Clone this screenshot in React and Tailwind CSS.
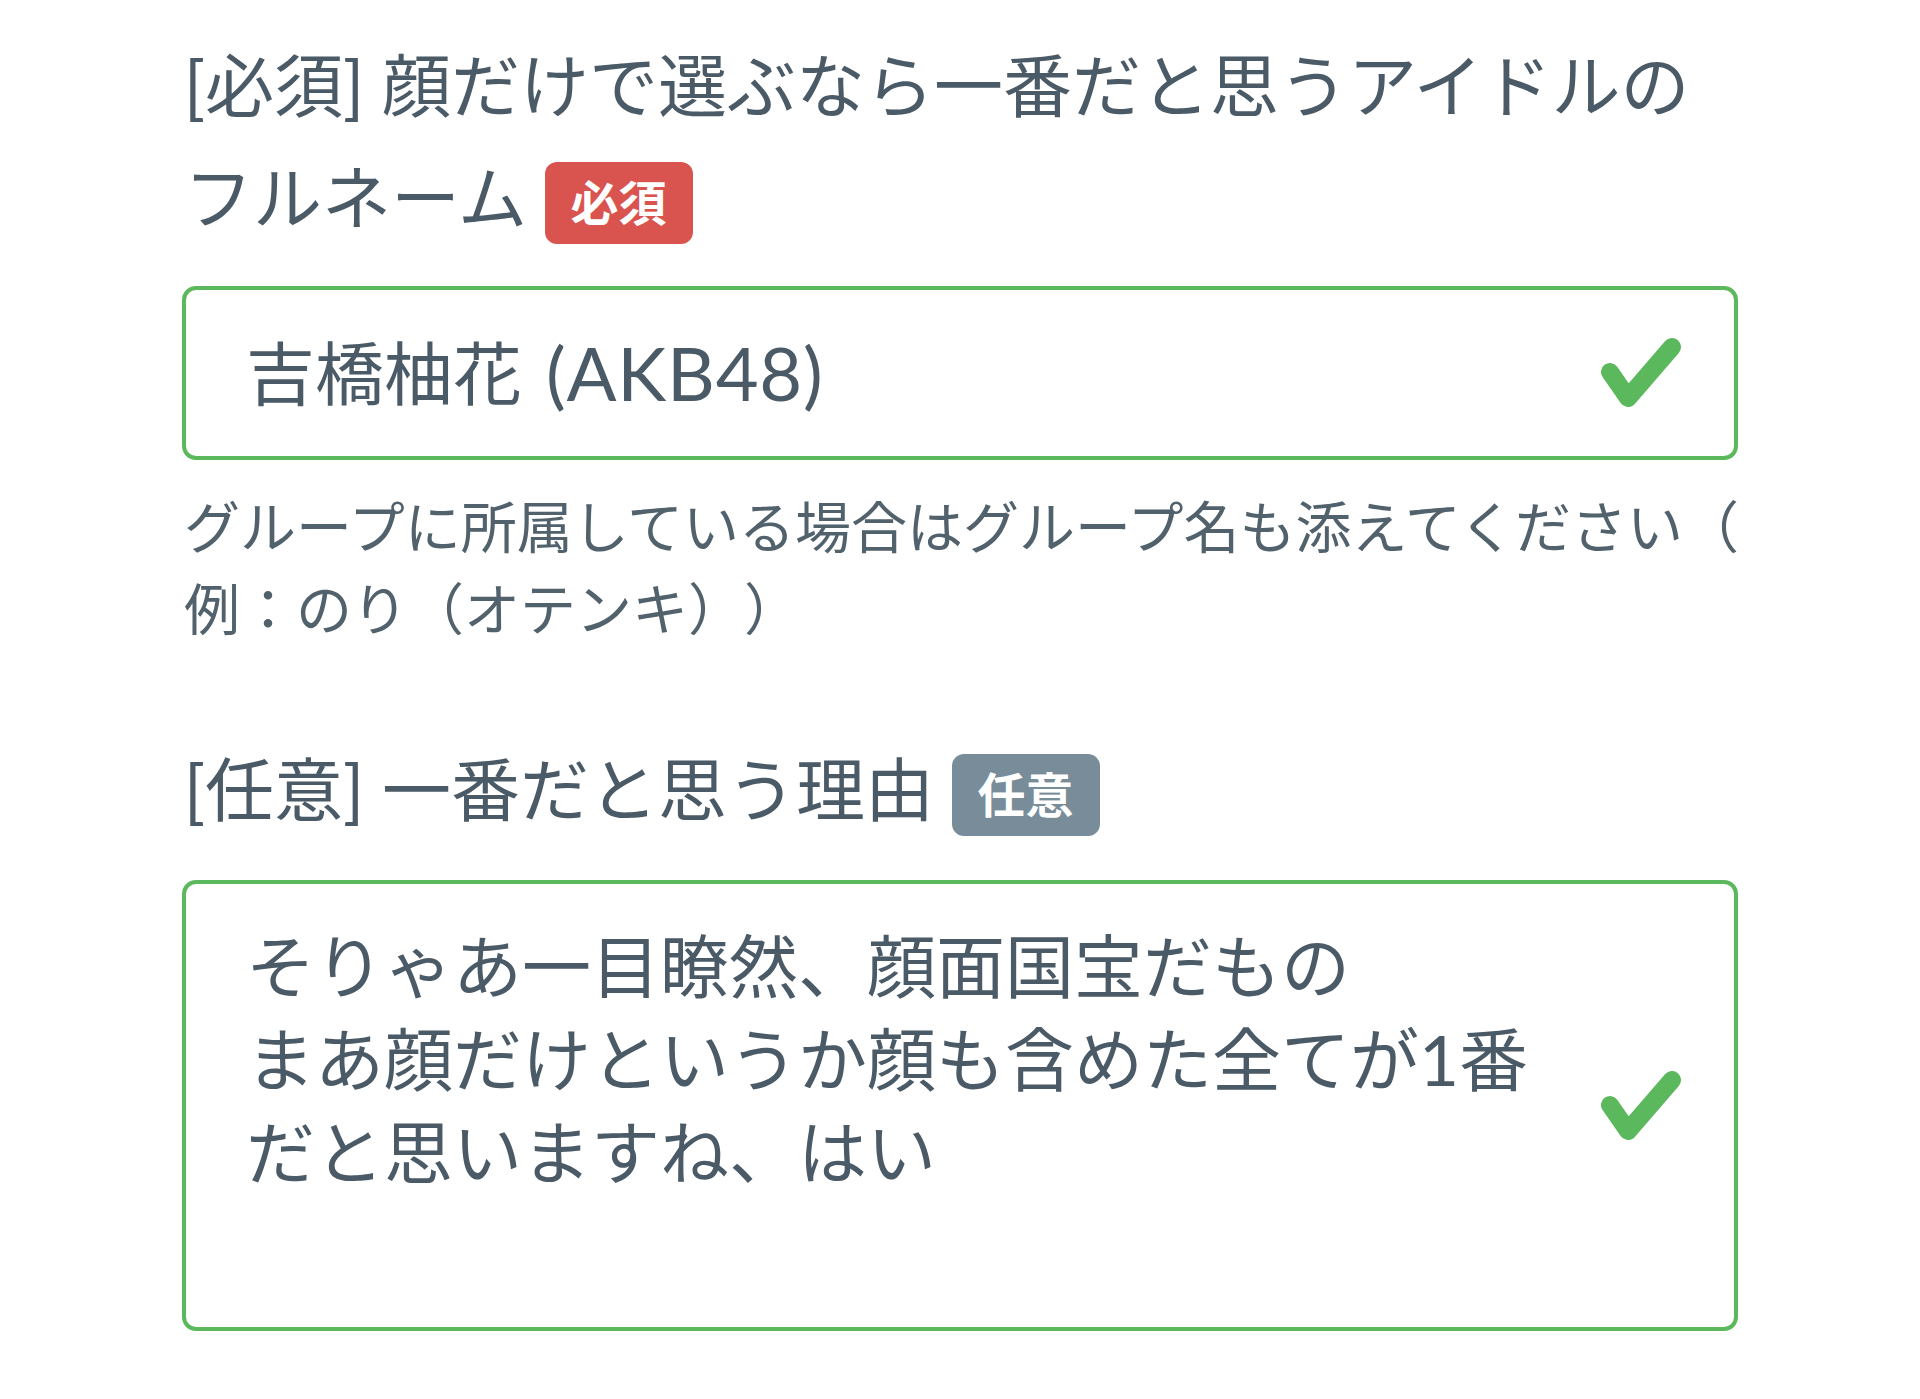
import React from 'react';

const font = { fontFamily: 'Lato, "Noto Sans CJK JP", sans-serif' };

const Check = () => (
  <svg width="80" height="70" viewBox="0 0 80 70" className="shrink-0">
    <polyline
      points="9,34 27,60 71,9"
      fill="none"
      stroke="#5cb85c"
      strokeWidth="18"
      strokeLinecap="round"
      strokeLinejoin="round"
    />
  </svg>
);

const Badge = ({ children, color }) => (
  <span
    className={`relative -top-[4px] inline-flex items-center justify-center align-middle h-[82px] px-[26px] rounded-[12px] text-white font-bold text-[48px] leading-none ${color}`}
  >
    {children}
  </span>
);

const App = () => {
  return (
    <div className="min-h-screen bg-white text-[#4a5a66] [text-spacing-trim:space-all]" style={font}>
      <div className="w-[1556px] mx-auto pt-[30px] pb-[68px]">
        <div className="text-[69px] leading-[112px] pl-[2px]">
          [必須] 顔だけで選ぶなら一番だと思うアイドルの
          <br />
          フルネーム <Badge color="bg-[#d9534f]">必須</Badge>
        </div>

        <div className="mt-[32px] h-[174px] border-4 border-[#5cb85c] rounded-[14px] flex items-center pl-[60px] pr-[53px]">
          <div className="flex-1 flex items-center text-[69px] leading-none">
            <span>吉橋柚花</span>
            <span className="ml-[24px] text-[74px] tracking-[0.01em]">(AKB48)</span>
          </div>
          <Check />
        </div>

        <div className="mt-[26px] text-[56px] leading-[82px] text-[#52626d] pl-[2px] whitespace-nowrap">
          グループに所属している場合はグループ名も添えてください（
          <br />
          例：のり（オテンキ））
        </div>

        <div className="mt-[84px] text-[69px] leading-[112px] pl-[2px]">
          [任意] 一番だと思う理由 <Badge color="bg-[#788c99]">任意</Badge>
        </div>

        <div className="mt-[34px] h-[451px] border-4 border-[#5cb85c] rounded-[14px] flex items-center pl-[60px] pr-[53px]">
          <div className="flex-1 self-start pt-[36px] text-[69px] leading-[93px]">
            そりゃあ一目瞭然、顔面国宝だもの
            <br />
            まあ顔だけというか顔も含めた全てが1番
            <br />
            だと思いますね、はい
          </div>
          <Check />
        </div>
      </div>
    </div>
  );
};

export default App;
